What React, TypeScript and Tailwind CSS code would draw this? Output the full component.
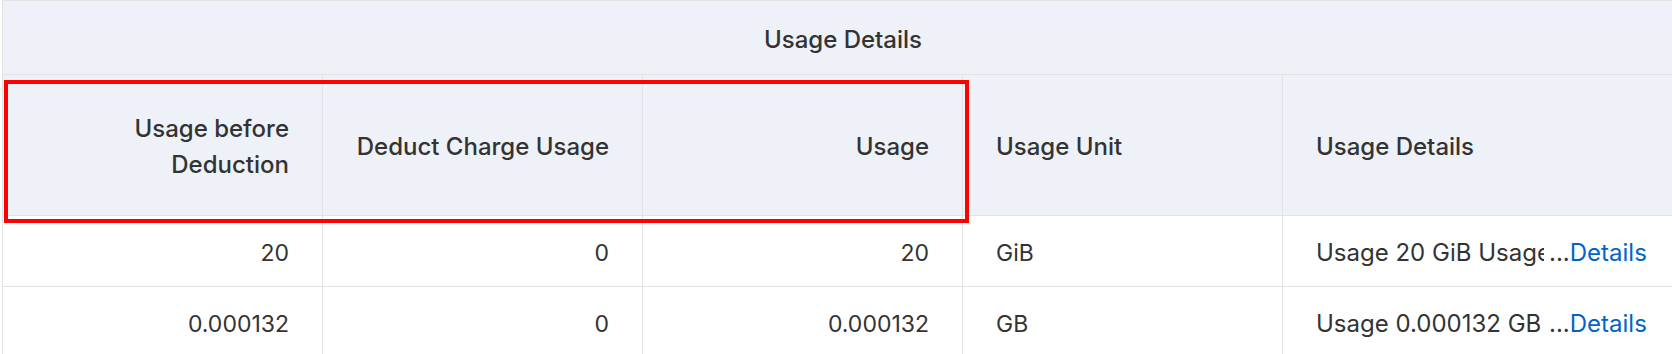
import React from "react";

const headBg = "bg-[#eef1f7]";

export default function App() {
  return (
    <div className="relative w-[1672px] h-[354px] overflow-hidden bg-white text-[#333333] [font-family:Inter,'Noto_Sans',sans-serif]">
      <div className="ml-[2px] w-[1681px] border-l border-t border-[#e3e3e3]">
        {/* group header */}
        <div className={`h-[74px] ${headBg} border-b border-[#e3e3e3] flex items-center justify-center pt-[4px] text-[24px] font-medium`}>
          Usage Details
        </div>
        {/* column headers */}
        <div className={`flex h-[141px] ${headBg} border-b border-[#e3e3e3] text-[24px] font-medium leading-[36px]`}>
          <div className="w-[320px] shrink-0 border-r border-[#e3e3e3] px-[33px] pt-[4px] flex items-center justify-end text-right">
            Usage before Deduction
          </div>
          <div className="w-[320px] shrink-0 border-r border-[#e3e3e3] pl-[30px] pr-[33px] pt-[4px] flex items-center justify-end text-right whitespace-nowrap">
            Deduct Charge Usage
          </div>
          <div className="w-[320px] shrink-0 border-r border-[#e3e3e3] px-[33px] pt-[4px] flex items-center justify-end text-right">
            Usage
          </div>
          <div className="w-[320px] shrink-0 border-r border-[#e3e3e3] px-[33px] pt-[4px] flex items-center">
            Usage Unit
          </div>
          <div className="w-[400px] shrink-0 px-[33px] pt-[4px] flex items-center">
            Usage Details
          </div>
        </div>
        {[
          { a: "20", b: "0", c: "20", unit: "GiB", detail: "Usage 20 GiB Usage 20 GiB" },
          { a: "0.000132", b: "0", c: "0.000132", unit: "GB", detail: "Usage 0.000132 GB" },
        ].map((r, i) => (
          <div key={i} className="flex h-[71px] border-b border-[#e3e3e3] text-[23px] font-normal">
            <div className="w-[320px] shrink-0 border-r border-[#e3e3e3] px-[33px] pt-[4px] flex items-center justify-end">
              {r.a}
            </div>
            <div className="w-[320px] shrink-0 border-r border-[#e3e3e3] px-[33px] pt-[4px] flex items-center justify-end">
              {r.b}
            </div>
            <div className="w-[320px] shrink-0 border-r border-[#e3e3e3] px-[33px] pt-[4px] flex items-center justify-end">
              {r.c}
            </div>
            <div className="w-[320px] shrink-0 border-r border-[#e3e3e3] px-[33px] pt-[4px] flex items-center">
              {r.unit}
            </div>
            <div className="w-[400px] shrink-0 px-[33px] pt-[4px] flex items-center whitespace-nowrap text-[24px]">
              <span className="inline-block w-[228px] overflow-hidden whitespace-nowrap">{r.detail}</span>
              <span className="ml-[5px]">...</span>
              <a className="text-[#0064c8] cursor-pointer">Details</a>
            </div>
          </div>
        ))}
      </div>
      <div className="absolute left-[4px] top-[80px] w-[965px] h-[143px] border-4 border-[#ff0000]" />
    </div>
  );
}
